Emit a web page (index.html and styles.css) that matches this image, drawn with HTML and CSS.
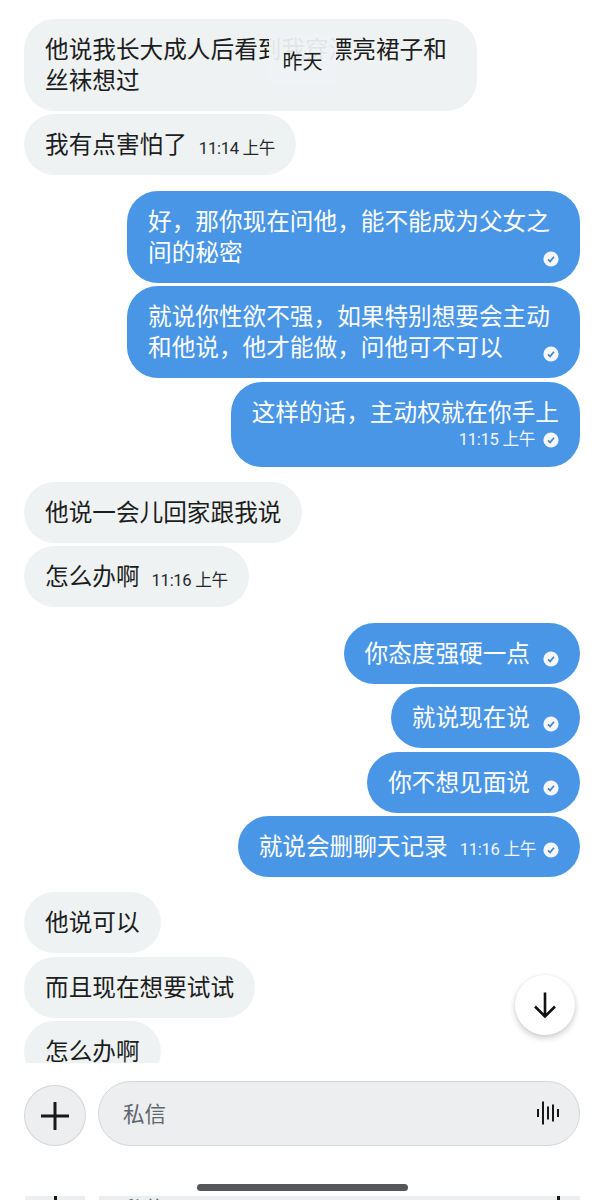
FILE: index.html
```html
<!DOCTYPE html>
<html lang="zh-CN">
<head>
<meta charset="utf-8">
<title>私信</title>
<link rel="stylesheet" href="styles.css">
</head>
<body>
<main class="page">
  <section class="thread">
    <div class="date-pill">昨天</div>
    <div class="group in">
      <div class="bubble">他说我长大成人后看到我穿漂亮裙子和丝袜想过</div>
      <div class="bubble inline">我有点害怕了<span class="time">11:14 上午</span></div>
    </div>
    <div class="group out">
      <div class="bubble stacked"><span>好，那你现在问他，能不能成为父女之间的秘密</span><svg class="check corner" viewBox="0 0 16 16"><use href="#tick"/></svg></div>
      <div class="bubble stacked"><span>就说你性欲不强，如果特别想要会主动和他说，他才能做，问他可不可以</span><svg class="check corner" viewBox="0 0 16 16"><use href="#tick"/></svg></div>
      <div class="bubble">这样的话，主动权就在你手上
        <div class="meta-row"><span class="time">11:15 上午</span><svg class="check" viewBox="0 0 16 16"><use href="#tick"/></svg></div>
      </div>
    </div>
    <div class="group in">
      <div class="bubble">他说一会儿回家跟我说</div>
      <div class="bubble inline">怎么办啊<span class="time">11:16 上午</span></div>
    </div>
    <div class="group out">
      <div class="bubble inline">你态度强硬一点<svg class="check" viewBox="0 0 16 16"><use href="#tick"/></svg></div>
      <div class="bubble inline">就说现在说<svg class="check" viewBox="0 0 16 16"><use href="#tick"/></svg></div>
      <div class="bubble inline">你不想见面说<svg class="check" viewBox="0 0 16 16"><use href="#tick"/></svg></div>
      <div class="bubble inline">就说会删聊天记录<span class="time">11:16 上午</span><svg class="check near" viewBox="0 0 16 16"><use href="#tick"/></svg></div>
    </div>
    <div class="group in">
      <div class="bubble">他说可以</div>
      <div class="bubble">而且现在想要试试</div>
      <div class="bubble">怎么办啊</div>
    </div>
  </section>

  <button class="scroll-down" aria-label="向下滚动">
    <svg viewBox="0 0 24 28" width="24" height="28"><path d="M12 1.5V25.5M2 15.5L12 25.5L22 15.5" fill="none" stroke="#111" stroke-width="2.6"/></svg>
  </button>

  <footer class="composer">
    <button class="plus" aria-label="添加">
      <svg viewBox="0 0 28 28" width="28" height="28"><path d="M14 0V28M0 14H28" stroke="#17181a" stroke-width="3"/></svg>
    </button>
    <div class="field">
      <span class="placeholder">私信</span>
      <svg class="wave" viewBox="0 0 24 24" width="24" height="24"><path d="M2 8V16M7 0.5V23.5M12 5.5V18.5M17 3.500V20.500M22 8V16" stroke="#17181a" stroke-width="2"/></svg>
    </div>
  </footer>

  <div class="home-bar"></div>

  <div class="peek">
    <div class="peek-plus"><i></i></div>
    <div class="peek-field"><span>私信</span><i></i></div>
  </div>
</main>

<svg class="defs" width="0" height="0" aria-hidden="true">
  <symbol id="tick" viewBox="0 0 16 16">
    <circle cx="8" cy="8" r="7.600" fill="#f4f8fd"/>
    <path d="M5 8.300L7.100 10.400L11 5.800" fill="none" stroke="#4a86c8" stroke-width="1.700"/>
  </symbol>
</svg>
</body>
</html>
```
FILE: styles.css
```css
* { box-sizing: border-box; }

html, body { margin: 0; padding: 0; background: #fff; }

body {
  font-family: "Noto Sans CJK SC", "Liberation Sans", sans-serif;
  color: #1b1d20;
}

.page {
  position: relative;
  width: 604px;
  height: 1200px;
  overflow: hidden;
  display: flex;
  flex-direction: column;
}

.thread {
  position: relative;
  height: 1063px;
  flex: none;
  padding: 19px 24px 0;
  overflow: hidden;
  display: flex;
  flex-direction: column;
  gap: 15.400px;
}

.group {
  display: flex;
  flex-direction: column;
  gap: 3.400px;
  flex: none;
}

.group.out { align-items: flex-end; }
.group.in { align-items: flex-start; }

.bubble {
  width: fit-content;
  max-width: 453px;
  padding: 14px 21px 16px;
  border-radius: 31px;
  font-size: 23.650px;
  line-height: 31px;
  font-weight: 400;
  flex: none;
}

.in .bubble { background: #eff2f3; color: #1b1d20; }
.out .bubble { background: #4a96e6; color: #fff; }

.bubble.inline {
  display: flex;
  align-items: center;
}

.bubble.stacked { display: grid; }
.bubble.stacked > * { grid-area: 1 / 1; }

.time {
  font-family: Roboto, "Noto Sans CJK SC", sans-serif;
  font-size: 16.600px;
  font-weight: 400;
  line-height: 20px;
  letter-spacing: -0.300px;
  white-space: nowrap;
}

.in .time { color: #24282c; }
.out .time { color: #f2f7fd; }

.inline .time { margin: 10px 0 0 12px; }

.check {
  width: 16px;
  height: 16px;
  flex: none;
  display: block;
}

.inline .check { margin: 14px 0 0 13px; }
.inline .check.near { margin: 10px 0 0 7px; }

.check.corner {
  justify-self: end;
  align-self: end;
}

.meta-row {
  display: flex;
  justify-content: flex-end;
  align-items: center;
  gap: 8px;
  height: 24px;
  margin: 1px 0 -1px;
}

.date-pill {
  position: absolute;
  left: 269px;
  top: 34px;
  width: 67px;
  height: 52px;
  display: flex;
  align-items: center;
  justify-content: center;
  background: rgba(240, 243, 244, 0.93);
  font-size: 20px;
  font-weight: 400;
  color: #1b1d20;
}

.scroll-down {
  position: absolute;
  left: 515px;
  top: 975px;
  width: 60px;
  height: 60px;
  padding: 0;
  border: 0;
  border-radius: 50%;
  background: #fff;
  box-shadow: 0 3px 6px rgba(0, 0, 0, 0.2), 0 0 3px rgba(0, 0, 0, 0.05);
  display: flex;
  align-items: center;
  justify-content: center;
}

.composer {
  flex: none;
  display: flex;
  align-items: flex-end;
  gap: 12px;
  margin-top: 18px;
  padding: 0 24px;
  height: 65px;
}

.plus {
  width: 62px;
  height: 61px;
  flex: none;
  padding: 0;
  border: 1.500px solid #d4d6d8;
  border-radius: 50%;
  background: #eceef0;
  display: flex;
  align-items: center;
  justify-content: center;
}

.field {
  flex: 1;
  height: 65px;
  border: 1.500px solid #d4d6d8;
  border-radius: 33px;
  background: #eceef0;
  display: flex;
  align-items: center;
  justify-content: space-between;
  padding: 0 19px 2px 24px;
}

.placeholder {
  font-size: 21.500px;
  font-weight: 400;
  color: #5f666e;
}

.home-bar {
  flex: none;
  width: 211px;
  height: 7px;
  margin: 38px auto 0;
  border-radius: 4px;
  background: #56575a;
}

.peek {
  flex: none;
  display: flex;
  gap: 14px;
  margin-top: 5px;
  padding: 0 24px 0 25px;
  height: 4px;
  overflow: hidden;
}

.peek-plus, .peek-field {
  background: #eceef0;
  display: flex;
  overflow: hidden;
  position: relative;
}

.peek-plus { width: 60px; justify-content: center; }
.peek-field { flex: 1; justify-content: space-between; padding: 0 20px 0 24px; }

.peek i {
  width: 3px;
  height: 4px;
  background: #17181a;
}

.peek span {
  font-size: 21.500px;
  line-height: 24px;
  font-weight: 400;
  color: #5f666e;
}

.defs { position: absolute; }
```
